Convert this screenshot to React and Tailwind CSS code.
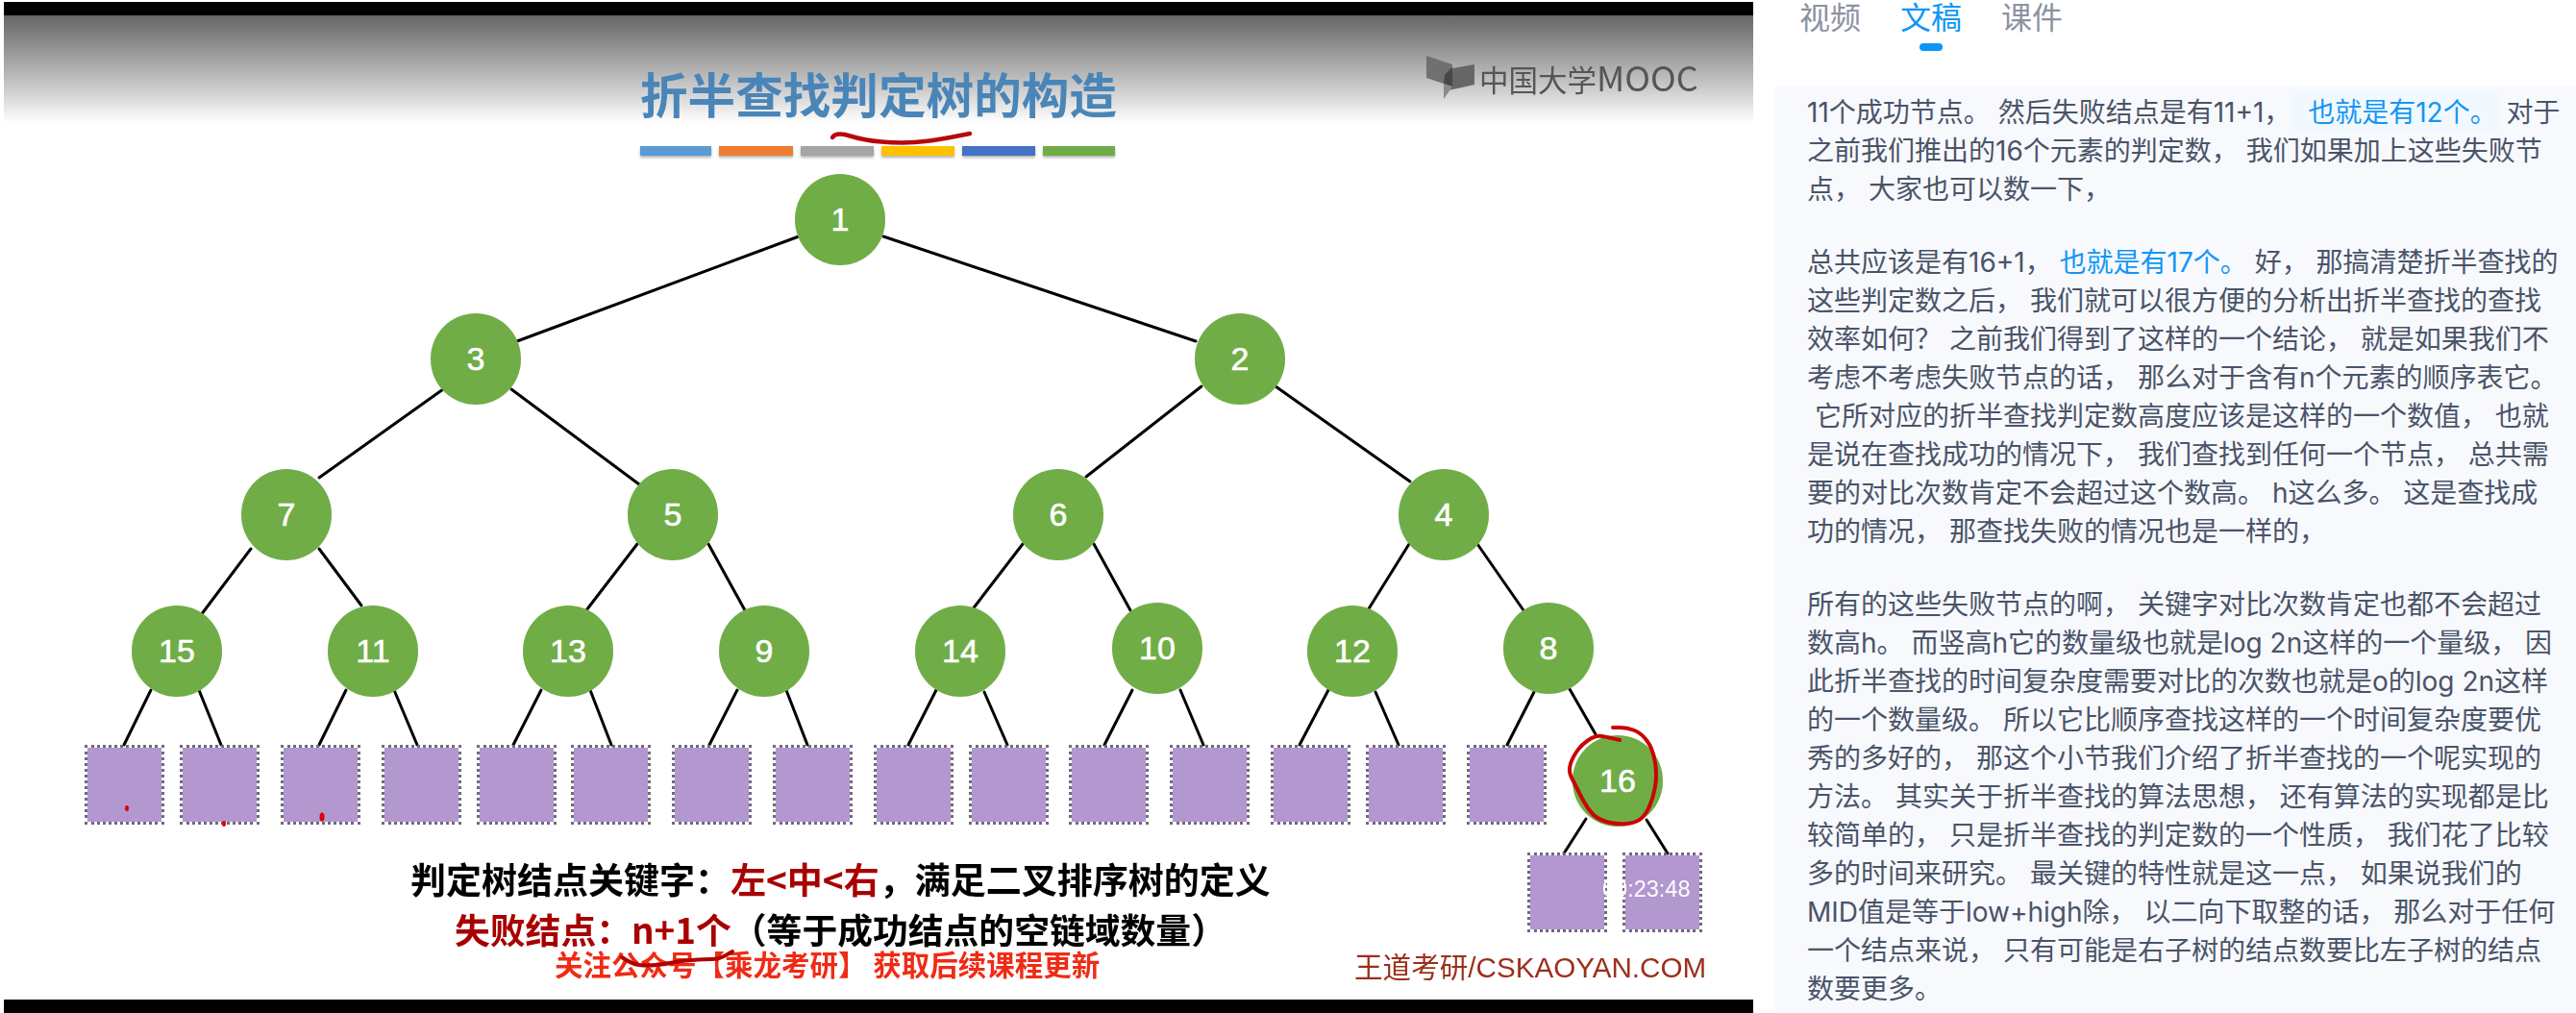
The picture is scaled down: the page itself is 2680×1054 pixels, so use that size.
import React from "react";

const CJK = "font-['Noto_Sans_CJK_SC',sans-serif]";

const nodes = {
  1: [874, 228], 3: [495, 373], 2: [1290, 373],
  7: [298, 535], 5: [700, 535], 6: [1101, 535], 4: [1502, 535],
  15: [184, 677], 11: [388, 677], 13: [591, 677], 9: [795, 677],
  14: [999, 677], 10: [1204, 674], 12: [1407, 677], 8: [1611, 674],
  16: [1683, 812],
};

// edges, measured off the slide: they don't run exactly through the node centres
const edges = [
  [831, 246, 538, 355], [919, 246, 1244, 355],
  [461, 405, 332, 497], [532, 405, 665, 504], [1250, 402, 1130, 496], [1327, 402, 1467, 501],
  [261, 571, 209, 640], [332, 571, 376, 630], [663, 566, 610, 635], [737, 566, 775, 635],
  [1064, 566, 1011, 635], [1138, 566, 1176, 635], [1466, 566, 1423, 635], [1537, 566, 1585, 635],
  [157, 718, 129, 775], [207, 718, 230, 775], [360, 718, 332, 775], [410, 718, 434, 775],
  [563, 718, 534, 775], [614, 718, 636, 775], [767, 718, 738, 775], [818, 718, 840, 775],
  [974, 718, 945, 775], [1024, 720, 1048, 775], [1178, 718, 1149, 775], [1228, 718, 1252, 775],
  [1382, 718, 1352, 775], [1431, 720, 1455, 775], [1596, 720, 1568, 775], [1633, 717, 1660, 764],
  [1650, 852, 1627, 888], [1713, 853, 1735, 888],
];

// failure squares: left, top
const squares = [
  [88, 775], [187, 775], [292, 775], [397, 775],
  [496, 775], [594, 775], [699, 775], [804, 775],
  [909, 775], [1008, 775], [1112, 775], [1217, 775],
  [1322, 775], [1421, 775], [1526, 775],
  [1589, 887], [1688, 887],
];

const bars = [
  ["bg-[#5b9bd5]", "w-[74px]"], ["bg-[#ed7d31]", "w-[77px]"], ["bg-[#a5a5a5]", "w-[76px]"],
  ["bg-[#ffc000]", "w-[76px]"], ["bg-[#4472c4]", "w-[76px]"], ["bg-[#70ad47]", "w-[75px]"],
];

function smooth(pts) {
  let d = `M${pts[0][0]},${pts[0][1]}`;
  for (let i = 1; i < pts.length - 1; i++) {
    const mx = (pts[i][0] + pts[i + 1][0]) / 2;
    const my = (pts[i][1] + pts[i + 1][1]) / 2;
    d += ` Q${pts[i][0]},${pts[i][1]} ${mx},${my}`;
  }
  const last = pts[pts.length - 1];
  return d + ` L${last[0]},${last[1]}`;
}

const circleMark = [
  [1685, 770], [1673, 767], [1660, 765], [1645, 775], [1635, 790], [1632, 803], [1637, 813],
  [1643, 825], [1652, 842], [1663, 853], [1683, 858], [1702, 856], [1712, 848], [1720, 830],
  [1724, 807], [1720, 780], [1708, 763], [1693, 757], [1678, 757],
];
const titleMark = [[866, 143], [870, 137], [899, 146], [935, 149], [968, 147], [1009, 139]];
const strikeMark = [[647, 996], [657, 1003], [673, 1005], [693, 1003], [707, 1000], [733, 998], [748, 998], [762, 990]];

const para1 = [
  <>11个成功节点。 然后失败结点是有11+1，<span className="inline-block bg-[#f2f9fe] pl-[10px] pr-[2px] text-[#1296f5]"> 也就是有12个。</span> 对于</>,
  "之前我们推出的16个元素的判定数， 我们如果加上这些失败节",
  "点， 大家也可以数一下，",
];
const para2 = [
  <>总共应该是有16+1， <span className="text-[#1296f5]">也就是有17个。</span> 好， 那搞清楚折半查找的</>,
  "这些判定数之后， 我们就可以很方便的分析出折半查找的查找",
  "效率如何？ 之前我们得到了这样的一个结论， 就是如果我们不",
  "考虑不考虑失败节点的话， 那么对于含有n个元素的顺序表它。",
  " 它所对应的折半查找判定数高度应该是这样的一个数值， 也就",
  "是说在查找成功的情况下， 我们查找到任何一个节点， 总共需",
  "要的对比次数肯定不会超过这个数高。 h这么多。 这是查找成",
  "功的情况， 那查找失败的情况也是一样的，",
];
const para3 = [
  "所有的这些失败节点的啊， 关键字对比次数肯定也都不会超过",
  "数高h。 而竖高h它的数量级也就是log 2n这样的一个量级， 因",
  "此折半查找的时间复杂度需要对比的次数也就是o的log 2n这样",
  "的一个数量级。 所以它比顺序查找这样的一个时间复杂度要优",
  "秀的多好的， 那这个小节我们介绍了折半查找的一个呢实现的",
  "方法。 其实关于折半查找的算法思想， 还有算法的实现都是比",
  "较简单的， 只是折半查找的判定数的一个性质， 我们花了比较",
  "多的时间来研究。 最关键的特性就是这一点， 如果说我们的",
  "MID值是等于low+high除， 以二向下取整的话， 那么对于任何",
  "一个结点来说， 只有可能是右子树的结点数要比左子树的结点",
  "数要更多。",
];

function Slide() {
  return (
    <div className="relative flex-1 overflow-hidden bg-white">
      <div className="absolute inset-x-0 top-0 h-[112px] bg-linear-to-b from-[#676767] to-white" />

      <div className="absolute inset-0 blur-[0.5px]">
        {/* course logo */}
        <div className="absolute left-[1480px] top-[42px] flex items-center gap-[5px] text-[#555555]">
          <svg width="50" height="45" viewBox="0 0 50 45">
            <polygon points="0,0 27,9 27,32 0,23" fill="#707070" />
            <polygon points="50,9 22,14 18,37 50,30" fill="#666666" />
            <polygon points="27,12 27,32 18,29 19,20" fill="#474747" />
            <polygon points="18,29 27,32 18,45" fill="#8a8a8a" />
          </svg>
          <span className={`${CJK} flex items-baseline text-[30.5px] leading-[40px]`}>
            中国大学<span className="text-[36px]">MOOC</span>
          </span>
        </div>

        {/* title and colour strip */}
        <div className={`${CJK} absolute left-[662px] top-[49px] text-[49.6px] font-bold leading-[62px] text-[#4a85b8]`}>
          折半查找判定树的构造
        </div>
        <div className="absolute left-[662px] top-[136px] flex gap-[8px]">
          {bars.map(([color, width]) => (
            <div key={color} className={`${color} ${width} h-[10px] shadow-[0_2px_3px_rgba(0,0,0,0.3)]`} />
          ))}
        </div>

        {/* tree edges */}
        <svg className="absolute inset-0" width="1820" height="1024" viewBox="4 16 1820 1024">
          {edges.map(([x1, y1, x2, y2]) => (
            <line key={`${x1}-${y1}`} x1={x1} y1={y1} x2={x2} y2={y2} stroke="#000" strokeWidth="3" strokeLinecap="round" />
          ))}
        </svg>

        {/* failure nodes */}
        {squares.map(([x, y]) => (
          <div
            key={x}
            className="absolute h-[83px] w-[83px] border-[3px] border-dotted border-[#6f6a7e] bg-[#b397cf] bg-clip-padding"
            style={{ left: x - 4, top: y - 16 }}
          />
        ))}

        {/* key nodes */}
        {Object.entries(nodes).map(([id, [x, y]]) => (
          <div
            key={id}
            className="absolute flex h-[95px] w-[94px] items-center justify-center rounded-full bg-[#70ad47] font-['Liberation_Sans',sans-serif] text-[34px] text-white [-webkit-text-stroke:0.6px_white]"
            style={{ left: x - 47 - 4, top: y - 47.5 - 16 }}
          >
            {id}
          </div>
        ))}

        {/* captions */}
        <div className={`${CJK} absolute left-[423px] top-[880px] whitespace-pre text-[37px] font-bold leading-[36px] text-black`}>
          判定树结点关键字：<span className="text-[#a80000]">左&lt;中&lt;右</span>，满足二叉排序树的定义
        </div>
        <div className={`${CJK} absolute left-[469px] top-[932px] whitespace-pre text-[36.8px] font-bold leading-[36px] text-black`}>
          <span className="text-[#a80000]">失败结点：n+1个</span>（等于成功结点的空链域数量）
        </div>
        <div className={`${CJK} absolute left-[573px] top-[971px] whitespace-pre text-[29.5px] font-bold leading-[30px] text-[#f02b15]`}>
          关注公众号【乘龙考研】 获取后续课程更新
        </div>
        <div className="absolute left-[1405px] top-[973px] whitespace-pre font-['Liberation_Sans','Noto_Sans_CJK_SC',sans-serif] text-[29.6px] leading-[36px] text-[#9b2f1c]">
          王道考研/CSKAOYAN.COM
        </div>
      </div>

      {/* pen marks drawn on the slide */}
      <svg className="absolute inset-0" width="1820" height="1024" viewBox="4 16 1820 1024" fill="none">
        <path d={smooth(circleMark)} stroke="#c90505" strokeWidth="4" strokeLinecap="round" />
        <path d={smooth(titleMark)} stroke="#b80808" strokeWidth="4.5" strokeLinecap="round" />
        <path d={smooth(strikeMark)} stroke="#b00000" strokeWidth="4" strokeLinecap="round" />
        <ellipse cx="132" cy="841" rx="2" ry="3" fill="#e00000" />
        <ellipse cx="233" cy="857" rx="2" ry="3" fill="#e00000" />
        <ellipse cx="335" cy="850" rx="2.5" ry="4.5" fill="#e00000" />
      </svg>

      <div className="absolute left-[1663px] top-[896px] font-['Liberation_Sans',sans-serif] text-[23.5px] leading-[26px] text-white">
        00:23:48
      </div>
    </div>
  );
}

function Transcript({ lines }) {
  return (
    <div>
      {lines.map((line, i) => (
        <div key={i} className="h-[40px] whitespace-pre">{line}</div>
      ))}
    </div>
  );
}

export default function App() {
  return (
    <div className="flex h-[1054px] w-[2680px] overflow-hidden bg-white">
      <div className="flex w-[1847px] shrink-0 flex-col pl-1 pr-[23px] pt-[2px]">
        <div className="h-[14px] bg-black" />
        <Slide />
        <div className="h-[14px] bg-black" />
      </div>

      <div className="flex min-w-0 flex-1 flex-col font-['Inter','Noto_Sans_CJK_SC',sans-serif]">
        <div className="flex h-[90px] shrink-0 gap-[41px] pl-[25px] text-[32px] leading-[37px] text-[#8b92a0]">
          <div>视频</div>
          <div className="flex flex-col items-center text-[#0f96f6]">
            文稿
            <div className="mt-[8px] h-[8px] w-[24px] rounded-full bg-[#0a96f8]" />
          </div>
          <div>课件</div>
        </div>
        <div className="flex flex-1 flex-col gap-[36px] bg-[#f7f9fd] pl-[33px] pt-[7px] text-[28px] leading-[40px] text-[#4a5468]">
          <Transcript lines={para1} />
          <Transcript lines={para2} />
          <Transcript lines={para3} />
        </div>
      </div>
    </div>
  );
}
